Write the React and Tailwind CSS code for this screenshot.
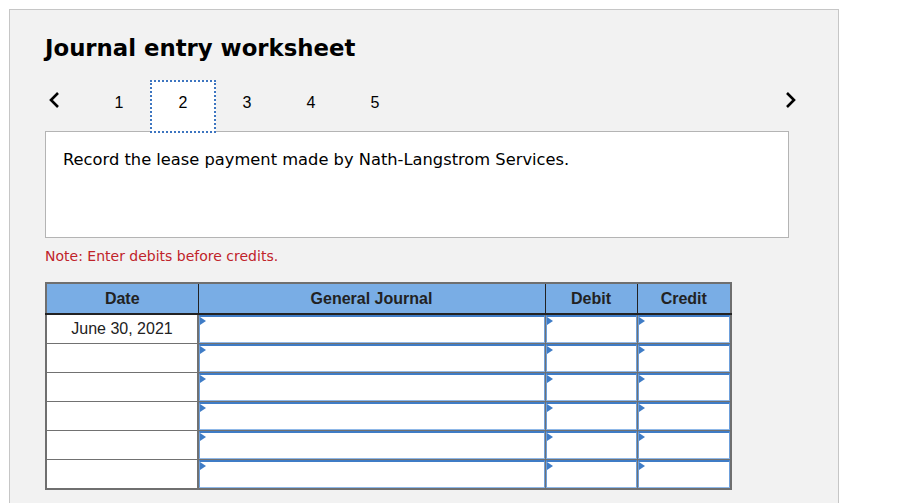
import React from "react";

const rows = ["June 30, 2021", "", "", "", "", ""];

function Chevron({ dir }) {
    return (
        <svg width="14" height="18" viewBox="0 0 14 18">
            <path
                d={dir === "left" ? "M10 2 L3 9 L10 16" : "M4 2 L11 9 L4 16"}
                fill="none"
                stroke="#000"
                strokeWidth="2.6"
            />
        </svg>
    );
}

function EntryCell() {
    return (
        <td className="p-0 border border-[#717171]">
            <div className="relative h-[28px] bg-white border-t-2 border-t-[#3f7cc6] border-x border-b border-x-[#6d9fdb] border-b-[#8fb8e8]">
                <span className="absolute left-0 top-0 w-0 h-0 border-y-[4px] border-y-transparent border-l-[6px] border-l-[#3f7cc6]" />
            </div>
        </td>
    );
}

export default function App() {
    return (
        <div className="bg-white h-[503px] pt-[9px] pl-[9px] overflow-hidden">
            <div className="w-[830px] h-[520px] bg-[#f2f2f2] border border-[#c6c6c6] pt-[23px] pl-[35px]">
                <h1 className="font-['DejaVu_Sans',sans-serif] font-bold text-[22.8px] leading-[30px] text-black">
                    Journal entry worksheet
                </h1>

                <div className="mt-[17px] flex items-start w-[756px] h-[51px] font-['Liberation_Sans',Arial,sans-serif] text-[16px] text-black">
                    <div className="w-[42px] h-[40px] flex items-center pl-[3px]">
                        <Chevron dir="left" />
                    </div>
                    {[1, 2, 3, 4, 5].map((n) =>
                        n === 2 ? (
                            <div
                                key={n}
                                className="relative z-10 w-[66px] -mx-[1px] h-[53px] bg-white border-2 border-dotted border-[#3d75c0] flex justify-center pt-[9px]"
                            >
                                {n}
                            </div>
                        ) : (
                            <div key={n} className="w-[64px] h-[40px] flex justify-center pt-[11px]">
                                {n}
                            </div>
                        )
                    )}
                    <div className="ml-auto h-[40px] flex items-center pr-[4px]">
                        <Chevron dir="right" />
                    </div>
                </div>

                <div className="w-[744px] h-[107px] bg-white border border-[#b4b4b4] pl-[17px] pt-[18px] font-['DejaVu_Sans',sans-serif] text-[16.3px] leading-[20px] text-black">
                    Record the lease payment made by Nath-Langstrom Services.
                </div>

                <p className="mt-[9px] font-['DejaVu_Sans',sans-serif] text-[14px] leading-[18px] text-[#c0232a]">
                    Note: Enter debits before credits.
                </p>

                <table className="mt-[17px] border-collapse border-2 border-[#6f6f6f] font-['Liberation_Sans',Arial,sans-serif] text-[16px] text-[#222]">
                    <thead>
                        <tr className="bg-[#79ade5] h-[31px]">
                            <th className="w-[152px] font-bold text-[16px] border-b-2 border-b-[#222] border-r border-r-[#222]">Date</th>
                            <th className="w-[347px] font-bold text-[16px] border-b-2 border-b-[#222] border-r border-r-[#222]">General Journal</th>
                            <th className="w-[92px] font-bold text-[16px] border-b-2 border-b-[#222] border-r border-r-[#222]">Debit</th>
                            <th className="w-[94px] font-bold text-[16px] border-b-2 border-b-[#222]">Credit</th>
                        </tr>
                    </thead>
                    <tbody>
                        {rows.map((date, i) => (
                            <tr key={i} className="h-[29px]">
                                <td className="p-0 bg-white border border-[#717171] border-r-2 text-center font-normal">
                                    {date}
                                </td>
                                <EntryCell />
                                <EntryCell />
                                <EntryCell />
                            </tr>
                        ))}
                    </tbody>
                </table>
            </div>
        </div>
    );
}
